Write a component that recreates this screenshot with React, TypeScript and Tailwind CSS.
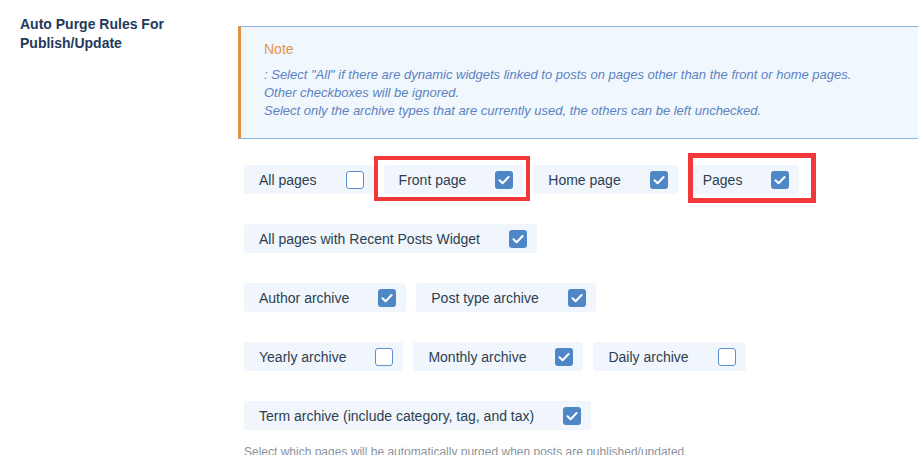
const rows: { label: string; checked: boolean; mark?: string }[][] = [
  [
    { label: "All pages", checked: false },
    { label: "Front page", checked: true, mark: "front" },
    { label: "Home page", checked: true },
    { label: "Pages", checked: true, mark: "pages" },
  ],
  [{ label: "All pages with Recent Posts Widget", checked: true }],
  [
    { label: "Author archive", checked: true },
    { label: "Post type archive", checked: true },
  ],
  [
    { label: "Yearly archive", checked: false },
    { label: "Monthly archive", checked: true },
    { label: "Daily archive", checked: false },
  ],
  [{ label: "Term archive (include category, tag, and tax)", checked: true }],
]

function Checkbox({ checked }: { checked: boolean }) {
  if (checked) {
    return (
      <span className="flex h-[18px] w-[18px] items-center justify-center rounded-[3px] bg-[#4f86c6]">
        <svg width="18" height="18" viewBox="0 0 18 18" fill="none">
          <path
            d="M4.5 9.2 L7.6 12.2 L13.6 6"
            stroke="white"
            strokeWidth="2"
            strokeLinecap="round"
            strokeLinejoin="round"
          />
        </svg>
      </span>
    )
  }
  return (
    <span className="block h-[18px] w-[18px] rounded-[3px] border-[1.5px] border-[#5b8fd0] bg-white" />
  )
}

function Pill({ label, checked, mark }: { label: string; checked: boolean; mark?: string }) {
  return (
    <span className="relative">
      <span className="flex h-[29px] items-center rounded-[3px] bg-[#f0f6fc] pl-[15px] pr-[10px] text-[14px] leading-[16px] text-[#2d3e50]">
        <span className="pt-[1px]">{label}</span>
        <span className="ml-[29px]">
          <Checkbox checked={checked} />
        </span>
      </span>
      {mark === "front" && (
        <span className="absolute -top-[9px] -bottom-[7px] -left-[10px] -right-[7px] border-[4px] border-[#f23838]" />
      )}
      {mark === "pages" && (
        <span className="absolute -top-[12px] -bottom-[9px] left-0 -right-[17px] border-[5px] border-[#f23838]" />
      )}
    </span>
  )
}

export default function App() {
  return (
    <div
      className="flex h-[455px] w-[918px] overflow-hidden bg-white"
      style={{ fontFamily: '"Liberation Sans", Arial, sans-serif' }}
    >
      <div className="w-[238px] shrink-0 pl-[20px] pt-[15px]">
        <h3 className="text-[14px] font-bold leading-[19px] text-[#23395b]">
          Auto Purge Rules For
          <br />
          Publish/Update
        </h3>
      </div>

      <div className="min-w-0 flex-1 pt-[26px]">
        <div className="w-[720px] border border-l-[3px] border-[#8db2df] border-l-[#e2913f] bg-[#f0f7fd] pb-[18px] pl-[23px] pt-[13px]">
          <p className="text-[14px] leading-[18px] text-[#e5924a]">Note</p>
          <div className="mt-[8px] text-[13px] italic leading-[18px] text-[#5d82c2]">
            <p>: Select "All" if there are dynamic widgets linked to posts on pages other than the front or home pages.</p>
            <p>Other checkboxes will be ignored.</p>
            <p>Select only the archive types that are currently used, the others can be left unchecked.</p>
          </div>
        </div>

        <div className="mt-[26px] flex flex-col gap-[30px] pl-[6px]">
          {rows.map((row, i) => (
            <div key={i} className="flex gap-[10px]">
              {row.map((item) => (
                <Pill key={item.label} {...item} />
              ))}
            </div>
          ))}
        </div>

        <p className="mt-[14px] pl-[6px] text-[12px] leading-[16px] text-[#8c939c]">
          Select which pages will be automatically purged when posts are published/updated.
        </p>
      </div>
    </div>
  )
}
